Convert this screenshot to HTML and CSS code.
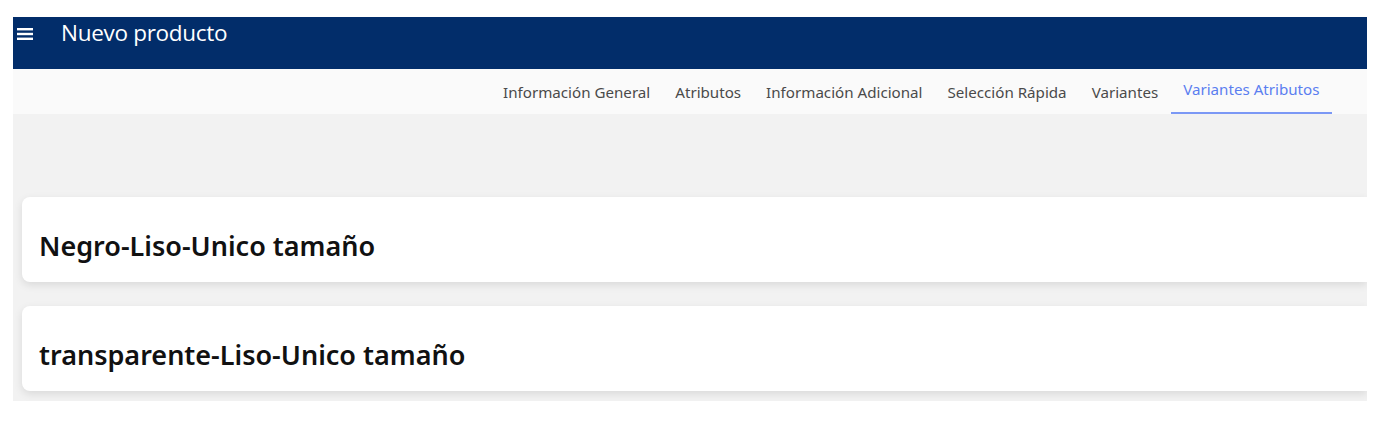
FILE: index.html
```html
<!DOCTYPE html>
<html lang="es">
<head>
<meta charset="utf-8">
<link rel="stylesheet" href="styles.css">
</head>
<body>
<div class="app">
  <header class="topbar">
    <svg class="menu" width="16" height="12" viewBox="0 0 16 12"><rect x="0" y="0" width="16" height="2.4" fill="#fff"/><rect x="0" y="4.8" width="16" height="2.4" fill="#fff"/><rect x="0" y="9.6" width="16" height="2.4" fill="#fff"/></svg>
    <h1 class="title">Nuevo producto</h1>
  </header>
  <nav class="tabs">
    <span class="tab">Información General</span>
    <span class="tab">Atributos</span>
    <span class="tab">Información Adicional</span>
    <span class="tab">Selección Rápida</span>
    <span class="tab">Variantes</span>
    <span class="tab active">Variantes Atributos</span>
  </nav>
  <main class="content">
    <section class="card"><h2 class="card-title">Negro-Liso-Unico tamaño</h2></section>
    <section class="card"><h2 class="card-title">transparente-Liso-Unico tamaño</h2></section>
  </main>
</div>
</body>
</html>
```

FILE: styles.css
```css
html, body {
  margin: 0;
  padding: 0;
  background: #fff;
}
.app {
  margin: 17px 14px 0 13px;
  width: 1354px;
  overflow: hidden;
  font-family: "Noto Sans", "Open Sans", sans-serif;
}
.topbar {
  height: 52px;
  background: #022d6a;
  display: flex;
  align-items: flex-start;
  padding-left: 4px;
  box-sizing: border-box;
}
.menu {
  margin-top: 11px;
  display: block;
}
.title {
  margin: 3px 0 0 28px;
  font-family: "Open Sans", sans-serif;
  font-weight: 400;
  font-size: 22.5px;
  line-height: 26px;
  color: #fff;
  letter-spacing: -0.3px;
}
.tabs {
  height: 45px;
  background: #fafafa;
  display: flex;
  justify-content: flex-end;
  align-items: stretch;
  padding-right: 35px;
  box-sizing: border-box;
}
.tab {
  font-size: 15.15px;
  color: #4a4a4a;
  padding: 13px 12.5px 0;
  line-height: 20px;
}
.tab.active {
  color: #5a7ef0;
  padding: 10px 12.5px 0;
  box-shadow: inset 0 -2px 0 #7b98f5;
}
.content {
  background: #f2f2f2;
  padding: 83px 0 10px 9px;
  display: flex;
  flex-direction: column;
  gap: 24px;
}
.card {
  background: #fff;
  border-radius: 8px 0 0 8px;
  height: 85px;
  box-sizing: border-box;
  padding: 34px 0 0 17px;
  box-shadow: 0 3px 8px rgba(0,0,0,0.10);
}
.card-title {
  margin: 0;
  font-family: "Noto Sans", sans-serif;
  font-weight: 600;
  font-size: 27px;
  line-height: 30px;
  color: #111;
}
```
